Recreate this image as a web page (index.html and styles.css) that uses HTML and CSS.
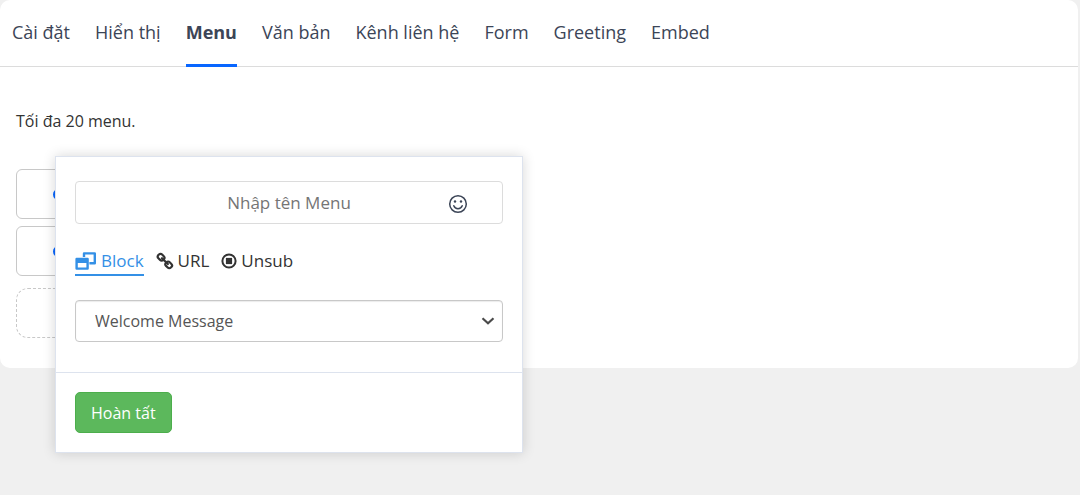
FILE: index.html
```
<!DOCTYPE html>
<html lang="vi">
<head>
    <meta charset="UTF-8">
    <meta name="viewport" content="width=device-width, initial-scale=1.0">
    <title>Menu</title>
    <link rel="stylesheet" href="styles.css">
</head>
<body>
    <div class="panel">
        <nav class="tabs">
            <a href="#">Cài đặt</a>
            <a href="#">Hiển thị</a>
            <a href="#" class="active">Menu</a>
            <a href="#">Văn bản</a>
            <a href="#">Kênh liên hệ</a>
            <a href="#">Form</a>
            <a href="#">Greeting</a>
            <a href="#">Embed</a>
        </nav>
        <div class="content">
            <p class="note">Tối đa 20 menu.</p>
            <div class="menu-area">
                <div class="menu-list">
                    <div class="menu-item"><span class="menu-dot"></span></div>
                    <div class="menu-item"><span class="menu-dot"></span></div>
                    <div class="menu-item add"></div>
                </div>

                <form class="popup">
                    <div class="popup-body">
                        <div class="name-field">
                            <input type="text" class="name-input" placeholder="Nhập tên Menu" aria-label="Nhập tên Menu">
                            <button type="button" class="emoji" aria-label="Emoji">
                                <svg width="20" height="20" viewBox="0 0 20 20" fill="none" stroke="#3c4557" stroke-width="1.5">
                                    <circle cx="10" cy="10" r="8.3"/>
                                    <path d="M5.8 11.8a4.5 4.5 0 0 0 8.4 0" stroke-linecap="round"/>
                                    <circle cx="7" cy="7.5" r="1.2" fill="#3c4557" stroke="none"/>
                                    <circle cx="13" cy="7.5" r="1.2" fill="#3c4557" stroke="none"/>
                                </svg>
                            </button>
                        </div>

                        <div class="types">
                            <a href="#" class="active">
                                <svg width="22" height="18" viewBox="0 0 22 18" fill="none" stroke="currentColor" stroke-width="2.4" stroke-linejoin="round">
                                    <path d="M9 5V1.4h10.8v9.8h-5.4"/>
                                    <path d="M1.6 7h11v9.6h-11z"/>
                                    <path d="M1 6h12v5H1z" fill="currentColor" stroke="none"/>
                                </svg>
                                Block
                            </a>
                            <a href="#">
                                <svg width="18" height="18" viewBox="0 0 18 18" fill="none" stroke="currentColor" stroke-width="2.2">
                                    <rect x="-3.4" y="-2.6" width="6.8" height="5.2" rx="2.2" transform="translate(5.1 5.2) rotate(45)"/>
                                    <rect x="-3.4" y="-2.6" width="6.8" height="5.2" rx="2.2" transform="translate(12.7 12.9) rotate(45)"/>
                                    <path d="M6 6.2l5.9 5.8" stroke-linecap="round"/>
                                </svg>
                                URL
                            </a>
                            <a href="#">
                                <svg width="16" height="16" viewBox="0 0 16 16" fill="none" stroke="currentColor" stroke-width="2">
                                    <circle cx="8" cy="8" r="6.6"/>
                                    <path d="M4.9 4.9h6.2v6.2H4.9z" fill="currentColor" stroke="none"/>
                                </svg>
                                Unsub
                            </a>
                        </div>

                        <div class="select-field">
                            <select class="block-select" aria-label="Block">
                                <option>Welcome Message</option>
                            </select>
                            <svg class="caret" width="14" height="8" viewBox="0 0 14 8" fill="none" stroke="#4a4a4a" stroke-width="2.2">
                                <path d="M1.5 1.2L7 6.2l5.5-5"/>
                            </svg>
                        </div>
                    </div>
                    <div class="popup-footer">
                        <button type="button" class="btn-done">Hoàn tất</button>
                    </div>
                </form>
            </div>
        </div>
    </div>
</body>
</html>
```
FILE: styles.css
```
* {
    box-sizing: border-box;
}

body {
    margin: 0;
    padding: 0 2px 0 0;
    min-height: 100vh;
    background-color: #f0f0f0;
    color: #333;
    font-family: "Segoe UI", "Open Sans", "Noto Sans", sans-serif;
    font-size: 17px;
    line-height: 24px;
}

a {
    color: inherit;
    text-decoration: none;
}

.panel {
    background-color: #fff;
    border-radius: 10px;
}

.tabs {
    display: flex;
    gap: 25px;
    padding: 0 12px;
    border-bottom: 1px solid #dcdcdc;
    color: #3c4557;
    font-size: 18px;
}

.tabs a {
    margin-bottom: -1px;
    padding: 20px 0;
    border-bottom: 3px solid transparent;
}

.tabs .active {
    border-bottom-color: #0866ff;
    font-weight: 700;
}

.content {
    padding: 42px 16px 30px;
}

.note {
    margin: 0 0 36px;
    font-size: 16px;
}

.menu-area {
    position: relative;
}

.menu-list {
    display: flex;
    flex-direction: column;
    gap: 7px;
    width: 240px;
}

.menu-item {
    display: flex;
    align-items: center;
    height: 50px;
    padding-left: 36px;
    border: 1px solid #c8c8c8;
    border-radius: 6px;
}

.menu-item.add {
    margin-top: 5px;
    border-style: dashed;
    border-radius: 12px;
}

.menu-dot {
    width: 11px;
    height: 11px;
    border: 2px solid #0866ff;
    border-radius: 50%;
}

/* popup */
.popup {
    position: absolute;
    top: -13px;
    left: 39px;
    width: 468px;
    border: 1px solid #dde3ee;
    background-color: #fff;
    box-shadow: 0 0 12px rgba(0, 0, 0, 0.16);
}

.popup-body {
    padding: 24px 19px 30px;
}

.popup-footer {
    padding: 19px;
    border-top: 1px solid #dde3ee;
}

.name-field,
.select-field {
    position: relative;
}

.name-input,
.block-select {
    display: block;
    width: 100%;
    border-radius: 4px;
    background-color: #fff;
    font: inherit;
}

.name-input {
    height: 43px;
    border: 1px solid #dcdcdc;
    text-align: center;
}

.name-input::placeholder {
    color: #757575;
    opacity: 1;
}

.emoji {
    position: absolute;
    top: 13px;
    right: 35px;
    display: flex;
    padding: 0;
    border: 0;
    background: none;
}

.types {
    display: flex;
    gap: 12px;
    margin: 25px 0 24px;
}

.types a {
    display: flex;
    align-items: center;
    gap: 4px;
    padding-bottom: 1px;
    border-bottom: 2px solid transparent;
}

.types .active {
    border-bottom-color: #3490e6;
    color: #3490e6;
}

.block-select {
    height: 42px;
    padding: 0 40px 0 19px;
    border: 1px solid #c8c8c8;
    box-shadow: inset 0 1px 1px rgba(0, 0, 0, 0.08);
    color: #555;
    font-size: 16px;
    appearance: none;
}

.caret {
    position: absolute;
    top: 17px;
    right: 8px;
    pointer-events: none;
}

.btn-done {
    display: block;
    height: 41px;
    padding: 0 15px;
    border: 1px solid #4cae4c;
    border-radius: 5px;
    background-color: #5cb85c;
    color: #fff;
    font: inherit;
    font-size: 16px;
}
```
